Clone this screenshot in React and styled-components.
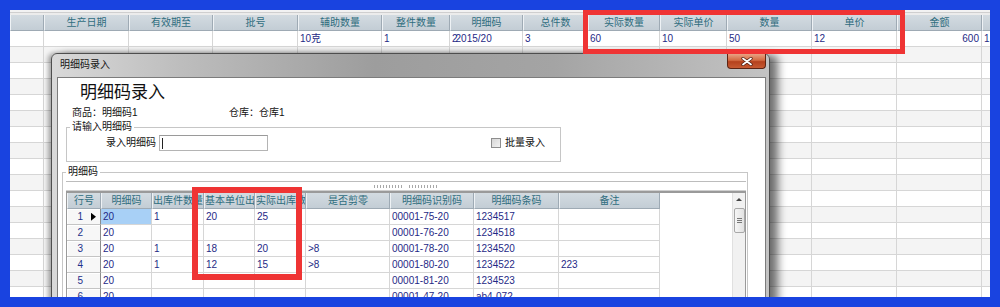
import React from 'react';
import styled, { createGlobalStyle } from 'styled-components';

const Global = createGlobalStyle`
  html, body { margin: 0; padding: 0; background: #1943e0; }
  body { font-family: "Liberation Sans", "Noto Sans CJK SC", sans-serif; }
  * { box-sizing: border-box; }
`;

const Frame = styled.div`
  position: relative;
  width: 1000px;
  height: 307px;
  padding: 10px;
  background: #1943e0;
  overflow: hidden;
`;

const Screen = styled.div`
  position: relative;
  width: 980px;
  height: 287px;
  background: #fff;
  overflow: hidden;
`;

const TopStrip = styled.div`
  height: 5px;
  background: linear-gradient(#f2f2f2 0 2px, #cfcfcf 2px 3px, #ececec 3px 5px);
`;

const Grid = styled.div`
  display: grid;
  grid-template-columns: ${p => p.$cols.map(c => (typeof c === 'number' ? c + 'px' : c)).join(' ')};
  grid-auto-rows: 16px;
`;

const HeadCell = styled.div`
  height: 16px;
  background: linear-gradient(#d3dbe1, #c3cdd5);
  border-left: 1px solid #eef2f5;
  border-right: 1px solid #9eaab4;
  border-bottom: 1px solid #9eaab4;
  color: #2f6d7e;
  font-size: 10px;
  line-height: 15px;
  text-align: center;
  white-space: nowrap;
  overflow: hidden;
`;

const Cell = styled.div`
  height: 16px;
  border-right: 1px solid #d6d6d6;
  border-bottom: 1px solid #d6d6d6;
  background: ${p => (p.$sel ? '#a8d0f6' : p.$alt ? '#f4f4f4' : '#fff')};
  color: #1f2a86;
  font-size: 10px;
  line-height: 15px;
  padding: 0 2px;
  text-align: ${p => (p.$right ? 'right' : 'left')};
  white-space: nowrap;
  overflow: hidden;
`;

const Overlap = styled.span`
  margin-right: -2px;
`;

/* ---------- dialog ---------- */
const Dialog = styled.div`
  position: absolute;
  left: 41px;
  top: 43px;
  width: 719px;
  height: 262px;
  border: 1px solid #4e4e4e;
  border-radius: 6px 6px 0 0;
  background: linear-gradient(90deg, #d9d9d9 0%, #bdbdbd 18%, #9d9d9d 45%, #a4a4a4 70%, #c3c3c3 100%);
  padding: 0 3px 0 5px;
  box-shadow: 8px 2px 9px rgba(0, 0, 0, 0.55), -3px 0 5px rgba(0, 0, 0, 0.35);
  display: flex;
  flex-direction: column;
`;

const TitleBar = styled.div`
  height: 23px;
  display: flex;
  align-items: flex-start;
`;

const TitleText = styled.span`
  padding: 5px 0 0 3px;
  font-size: 10px;
  line-height: 12px;
  color: #151515;
`;

const CloseButton = styled.div`
  margin-left: auto;
  width: 39px;
  height: 15px;
  border: 1px solid #5c2414;
  border-top: none;
  border-radius: 0 0 4px 4px;
  background: linear-gradient(#e8a284, #d26a42 45%, #b5411d 55%, #c65a32);
  display: flex;
  align-items: center;
  justify-content: center;
`;

const Client = styled.div`
  flex: 1;
  background: #fff;
  border: 1px solid #7c7c7c;
  display: flex;
  flex-direction: column;
  overflow: hidden;
`;

const BigTitle = styled.div`
  margin: 5px 0 0 22px;
  font-size: 17px;
  line-height: 20px;
  color: #111;
`;

const InfoRow = styled.div`
  margin-top: 4px;
  padding-left: 14px;
  display: flex;
  font-size: 10px;
  line-height: 12px;
  color: #111;
`;

const InfoItem = styled.span`
  width: ${p => p.$w || 'auto'};
`;

const Group = styled.fieldset`
  margin: ${p => p.$m};
  width: ${p => p.$w}px;
  height: ${p => p.$h}px;
  padding: ${p => p.$pad};
  border: 1px solid #c6c6c6;
  min-width: 0;
`;

const Legend = styled.legend`
  padding: 0 2px;
  font-size: 10px;
  line-height: 12px;
  color: #111;
`;

const InputRow = styled.div`
  display: flex;
  align-items: center;
  padding: 0 12px 0 36px;
`;

const Label = styled.span`
  font-size: 10px;
  line-height: 12px;
  color: #111;
`;

const TextBox = styled.div`
  margin-left: 3px;
  width: 109px;
  height: 16px;
  border: 1px solid #b4b4b4;
  border-top-color: #9a9a9a;
  background: #fff;
  padding: 2px 0 0 2px;
`;

const Caret = styled.div`
  width: 1px;
  height: 11px;
  background: #222;
`;

const CheckWrap = styled.div`
  margin-left: auto;
  display: flex;
  align-items: center;
  gap: 4px;
`;

const CheckBox = styled.div`
  width: 10px;
  height: 10px;
  border: 1px solid #8e8e8e;
  background: linear-gradient(135deg, #d6d6d6, #f2f2f2);
`;

const Splitter = styled.div`
  margin-top: 3px;
  height: 10px;
  border-top: 1px solid #bcbcbc;
  border-bottom: 1px solid #cfcfcf;
  display: flex;
  justify-content: center;
  align-items: center;
  gap: 5px;
`;

const Grip = styled.span`
  width: 30px;
  height: 3px;
  background: repeating-linear-gradient(90deg, #a8a8a8 0 1px, transparent 1px 3px);
`;

const GridWrap = styled.div`
  display: flex;
  border-top: 2px solid #9a9a9a;
  border-left: 1px solid #9a9a9a;
  border-right: 1px solid #9a9a9a;
  height: 110px;
`;

const Filler = styled.div`
  flex: 1;
  background: #fff;
`;

const ScrollBar = styled.div`
  width: 13px;
  background: #f1f1f1;
  border-left: 1px solid #e0e0e0;
  display: flex;
  flex-direction: column;
  align-items: center;
`;

const ArrowUp = styled.div`
  margin-top: 5px;
  width: 0;
  height: 0;
  border-left: 3px solid transparent;
  border-right: 3px solid transparent;
  border-bottom: 3px solid #444;
`;

const Thumb = styled.div`
  margin-top: 7px;
  width: 11px;
  height: 25px;
  border: 1px solid #a8a8a8;
  border-radius: 2px;
  background: linear-gradient(90deg, #f6f6f6, #e2e2e2);
  display: flex;
  flex-direction: column;
  align-items: center;
  justify-content: center;
  gap: 1px;
`;

const GripLine = styled.div`
  width: 5px;
  height: 1px;
  background: #777;
`;

const RowHead = styled.div`
  height: 16px;
  background: #f7f7f7;
  border-right: 1px solid #8c8c8c;
  border-bottom: 1px solid #c4c4c4;
  box-shadow: inset 1px 1px #fff;
  display: flex;
  align-items: center;
  justify-content: flex-end;
  padding-right: 2px;
  color: #23318a;
  font-size: 10px;
  line-height: 15px;
`;

const Indicator = styled.span`
  width: 5px;
  height: 8px;
  margin-left: 8px;
  margin-right: 2px;
  clip-path: ${p => (p.$on ? 'polygon(0 0, 100% 50%, 0 100%)' : 'none')};
  background: ${p => (p.$on ? '#000' : 'transparent')};
`;

const RedBox = styled.div`
  position: absolute;
  left: ${p => p.$x}px;
  top: ${p => p.$y}px;
  width: ${p => p.$w}px;
  height: ${p => p.$h}px;
  border: ${p => p.$t}px solid #ef3434;
  pointer-events: none;
`;

const mainCols = [34, 85, 84, 85, 84, 68, 73, 65, 72, 67, 85, 85, 85, 20];
const mainHeaders = ['', '生产日期', '有效期至', '批号', '辅助数量', '整件数量', '明细码', '总件数', '实际数量', '实际单价', '数量', '单价', '金额', ''];
const mainRow1 = ['', '', '', '', '10克', '1', 'SPECIAL', '3', '60', '10', '50', '12', '600', '1'];

const subCols = [34, 51, 52, 51, 51, 84, 84, 85, 101];
const subHeaders = ['行号', '明细码', '出库件数量', '基本单位出库数', '实际出库数量', '是否剪零', '明细码识别码', '明细码条码', '备注'];
const subRows = [
  ['20', '1', '20', '25', '', '00001-75-20', '1234517', ''],
  ['20', '', '', '', '', '00001-76-20', '1234518', ''],
  ['20', '1', '18', '20', '>8', '00001-78-20', '1234520', ''],
  ['20', '1', '12', '15', '>8', '00001-80-20', '1234522', '223'],
  ['20', '', '', '', '', '00001-81-20', '1234523', ''],
  ['20', '', '', '', '', '00001-47-20', 'ab4-072', ''],
];

function MainGrid() {
  const rows = [];
  for (let r = 0; r < 17; r++) {
    mainCols.forEach((_, c) => {
      let content = r === 0 ? mainRow1[c] : '';
      if (content === 'SPECIAL') content = (<><Overlap>2</Overlap>2015/20</>);
      rows.push(
        <Cell key={`${r}-${c}`} $alt={r % 2 === 1} $right={r === 0 && c === 12}>
          {content}
        </Cell>
      );
    });
  }
  return (
    <Grid $cols={mainCols}>
      {mainHeaders.map((h, i) => (
        <HeadCell key={'h' + i}>{h}</HeadCell>
      ))}
      {rows}
    </Grid>
  );
}

function DetailGrid() {
  return (
    <Grid $cols={subCols}>
      {subHeaders.map((h, i) => (
        <HeadCell key={'sh' + i}>{h}</HeadCell>
      ))}
      {subRows.map((row, r) => (
        <React.Fragment key={'r' + r}>
          <RowHead>
            {r + 1}
            <Indicator $on={r === 0} />
          </RowHead>
          {row.map((v, c) => (
            <Cell key={c} $sel={r === 0 && c === 0}>
              {v}
            </Cell>
          ))}
        </React.Fragment>
      ))}
    </Grid>
  );
}

function CloseX() {
  return (
    <svg width="12" height="9" viewBox="0 0 12 9">
      <path d="M2 1.5 L10 7.5 M10 1.5 L2 7.5" stroke="#4a1a0e" strokeWidth="3.2" strokeLinecap="round" />
      <path d="M2 1.5 L10 7.5 M10 1.5 L2 7.5" stroke="#fff" strokeWidth="1.8" strokeLinecap="round" />
    </svg>
  );
}

export default function App() {
  return (
    <>
      <Global />
      <Frame>
        <Screen>
          <TopStrip />
          <MainGrid />
          <Dialog>
            <TitleBar>
              <TitleText>明细码录入</TitleText>
              <CloseButton>
                <CloseX />
              </CloseButton>
            </TitleBar>
            <Client>
              <BigTitle>明细码录入</BigTitle>
              <InfoRow>
                <InfoItem $w="157px">商品：明细码1</InfoItem>
                <InfoItem>仓库：仓库1</InfoItem>
              </InfoRow>
              <Group $m="2px 0 0 8px" $w={495} $h={42} $pad="2px 3px 0 3px">
                <Legend>请输入明细码</Legend>
                <InputRow>
                  <Label>录入明细码</Label>
                  <TextBox>
                    <Caret />
                  </TextBox>
                  <CheckWrap>
                    <CheckBox />
                    <Label>批量录入</Label>
                  </CheckWrap>
                </InputRow>
              </Group>
              <Group $m="4px 0 0 4px" $w={686} $h={150} $pad="0 1px 0 3px">
                <Legend>明细码</Legend>
                <Splitter>
                  <Grip />
                  <Grip />
                </Splitter>
                <GridWrap>
                  <DetailGrid />
                  <Filler />
                  <ScrollBar>
                    <ArrowUp />
                    <Thumb>
                      <GripLine />
                      <GripLine />
                      <GripLine />
                    </Thumb>
                  </ScrollBar>
                </GridWrap>
              </Group>
            </Client>
          </Dialog>
        </Screen>
        <RedBox $x={583} $y={10} $w={322} $h={44} $t={5} />
        <RedBox $x={192} $y={187} $w={110} $h={93} $t={6} />
      </Frame>
    </>
  );
}
